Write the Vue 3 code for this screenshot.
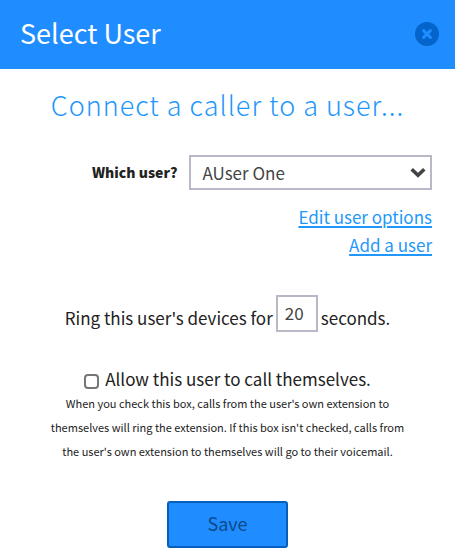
<template>
  <div class="modal">
    <header class="modal-header">
      <h1>Select User</h1>
      <button type="button" class="close-btn" aria-label="Close">
        <svg viewBox="0 0 24 24" width="24" height="24" aria-hidden="true">
          <circle cx="12" cy="12" r="12" fill="#0365cb" />
          <path d="M8.6 8.6l6.8 6.8M15.4 8.6l-6.8 6.8" stroke="#1f8dff" stroke-width="3" stroke-linecap="round" />
        </svg>
      </button>
    </header>

    <form class="modal-body" @submit.prevent>
      <h2>Connect a caller to a user...</h2>

      <div class="user-row">
        <label for="user">Which user?</label>
        <div class="select-wrap">
          <select id="user" v-model="selectedUser">
            <option v-for="user in users" :key="user" :value="user">{{ user }}</option>
          </select>
          <svg class="chevron" viewBox="0 0 16 11" width="16" height="11" aria-hidden="true">
            <path d="M1.7 2.2L8 8.2l6.3-6" fill="none" stroke="#444" stroke-width="3.6" />
          </svg>
        </div>
      </div>

      <div class="links">
        <a href="#edit">Edit user options</a>
        <a href="#add">Add a user</a>
      </div>

      <div class="ring-row">
        <label for="seconds">Ring this user's devices for</label>
        <input id="seconds" v-model="seconds" type="text" />
        <span>seconds.</span>
      </div>

      <div class="check-row">
        <input id="self-call" v-model="allowSelf" type="checkbox" />
        <label for="self-call">Allow this user to call themselves.</label>
      </div>
      <p class="hint">
        When you check this box, calls from the user's own extension to themselves will ring the
        extension. If this box isn't checked, calls from the user's own extension to themselves will
        go to their voicemail.
      </p>

      <button type="submit" class="save-btn">Save</button>
    </form>
  </div>
</template>

<script setup>
import { ref } from 'vue';

const users = ['AUser One'];
const selectedUser = ref('AUser One');
const seconds = ref('20');
const allowSelf = ref(false);
</script>

<style>
body {
  margin: 0;
  background: #fff;
}
</style>

<style scoped>
.modal,
.modal button,
.modal input,
.modal select {
  font-family: "Noto Sans CJK SC", "Noto Sans", sans-serif;
}

.modal {
  color: #222;
  font-size: 17px;
  line-height: 28px;
}

.modal * {
  box-sizing: border-box;
}

.modal-header {
  display: flex;
  align-items: center;
  justify-content: space-between;
  padding: 14px 16px 15px 20px;
  background: #1f8dff;
}

h1 {
  margin: 0;
  padding-bottom: 2px;
  color: #fff;
  font-size: 27px;
  font-weight: 400;
  line-height: 38px;
}

.close-btn {
  display: flex;
  padding: 0;
  border: none;
  background: none;
  cursor: pointer;
}

.modal-body {
  display: flex;
  flex-direction: column;
  padding: 16px 23px 10px;
}

h2 {
  margin: 0;
  color: #1f97fb;
  font-size: 27px;
  font-weight: 300;
  line-height: 40px;
  text-align: center;
  letter-spacing: 1px;
}

.user-row {
  display: flex;
  align-items: center;
  gap: 12px;
  margin-top: 30px;
}

.user-row label {
  flex: 7;
  padding-bottom: 2px;
  font-size: 14px;
  font-weight: 900;
  text-align: right;
}

.select-wrap {
  position: relative;
  flex: 11;
}

.select-wrap select {
  display: block;
  width: 100%;
  height: 35px;
  padding: 0 32px 1px 11px;
  border: 2px solid #b9b8c6;
  border-radius: 0;
  background: #fff;
  color: #444;
  font-size: 17px;
  appearance: none;
}

.chevron {
  position: absolute;
  top: 12px;
  right: 6px;
  pointer-events: none;
}

.links {
  display: flex;
  flex-direction: column;
  align-items: flex-end;
  margin-top: 13px;
}

.links a {
  color: #1f97fb;
  text-decoration-thickness: 2px;
  text-underline-offset: 2px;
}

.ring-row {
  display: flex;
  align-items: center;
  justify-content: center;
  gap: 3px;
  margin-top: 36px;
}

.ring-row label,
.ring-row span {
  padding-top: 8px;
}

.ring-row input {
  width: 42px;
  height: 37px;
  padding: 0 7px 2px;
  border: 2px solid #b9b8c6;
  border-radius: 0;
  color: #444;
  font-size: 17px;
}

.check-row {
  display: flex;
  align-items: center;
  justify-content: center;
  gap: 6px;
  margin-top: 33px;
}

.check-row input {
  width: 15px;
  height: 15px;
  margin: 4px 0 0;
  border: 2px solid #767676;
  border-radius: 4px;
  background: #fff;
  appearance: none;
}

.check-row input:checked {
  background: #1f8dff;
}

.hint {
  margin: -2px 24px 0;
  font-size: 11px;
  line-height: 24px;
  text-align: center;
}

.save-btn {
  align-self: center;
  width: 121px;
  height: 47px;
  margin-top: 38px;
  padding: 0 0 3px;
  border: 2px solid #0560bd;
  border-radius: 3px;
  background: #1f8dff;
  color: #0b4a8c;
  font-size: 18px;
  cursor: pointer;
}
</style>
